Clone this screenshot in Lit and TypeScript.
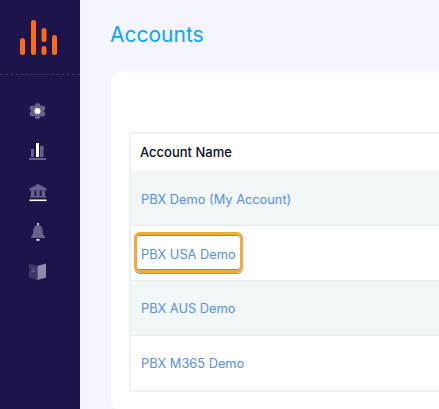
import { LitElement, html, css, svg } from "lit";
import { customElement } from "lit/decorators.js";

const dim = "#66648e";
const logo = svg`<svg class="logo" width="40" height="40" viewBox="0 0 40 40">
  <g fill="#ff6d0a">
    <rect x="0" y="18" width="5" height="17" rx="2.5"/>
    <rect x="11" y="0" width="5" height="35" rx="2.5"/>
    <rect x="21.5" y="8" width="5" height="14" rx="2.5"/>
    <rect x="21.5" y="26" width="5" height="9" rx="2.5"/>
    <rect x="32" y="15" width="5" height="20" rx="2.5"/>
  </g></svg>`;

const gear = svg`<svg width="18" height="18" viewBox="0 0 18 18">
  <g fill="${dim}"><circle cx="8.5" cy="9" r="6"/>
  <circle cx="8.5" cy="3.6" r="2.7"/><circle cx="8.5" cy="14.4" r="2.7"/>
  <circle cx="3.5" cy="6.2" r="2.7"/><circle cx="13.5" cy="6.2" r="2.7"/>
  <circle cx="3.5" cy="11.8" r="2.7"/><circle cx="13.5" cy="11.8" r="2.7"/></g>
  <circle cx="8.5" cy="9" r="3" fill="#fff"/></svg>`;

const chart = svg`<svg width="18" height="18" viewBox="0 0 18 18">
  <rect x="2" y="7" width="3" height="8" fill="${dim}"/>
  <rect x="7" y="1" width="3" height="14" fill="#fff"/>
  <rect x="11" y="4" width="3.5" height="11" fill="${dim}"/>
  <rect x="0" y="16" width="17" height="2" fill="${dim}"/></svg>`;

const bank = svg`<svg width="18" height="18" viewBox="0 0 18 18">
  <path d="M9 2 L17.5 6.5 V8.5 H0.5 V6.5 Z" fill="${dim}"/>
  <g fill="${dim}"><rect x="2" y="8.5" width="3.4" height="6"/><rect x="7.3" y="8.5" width="3.4" height="6"/><rect x="12.6" y="8.5" width="3.4" height="6"/>
  <rect x="1" y="14" width="16" height="1.5"/></g>
  <rect x="0.5" y="17.5" width="17" height="1.6" fill="#fff"/></svg>`;

const bell = svg`<svg width="16" height="18" viewBox="0 0 16 18">
  <rect x="7.2" y="1" width="1.6" height="3" fill="#fff"/>
  <path d="M8 3 C5 3 3.8 5.5 3.5 8 C3.2 11 2.8 13 1 15 V16 H15 V15 C13.2 13 12.8 11 12.5 8 C12.2 5.5 11 3 8 3 Z" fill="${dim}"/>
  <rect x="6.5" y="17" width="3" height="1.7" fill="#fff"/></svg>`;

const book = svg`<svg width="18" height="18" viewBox="0 0 18 18">
  <path d="M0 1.5 L8.5 4 V18 L0 15.5 Z" fill="#3d3768"/>
  <path d="M8.5 4 L17 1.5 V15.5 L8.5 18 Z" fill="#8d8ba8"/>
  <rect x="3" y="7" width="3" height="1" fill="${dim}"/><rect x="2.5" y="9" width="4" height="1" fill="${dim}"/></svg>`;

@customElement("app-root")
export class AppRoot extends LitElement {
  static styles = css`
    :host { display: flex; width: 439px; height: 409px; overflow: hidden; background: #f4f5fe; font-family: Inter, "Liberation Sans", sans-serif; }
    .side { flex: 0 0 80px; background: #1c144a; display: flex; flex-direction: column; align-items: center; }
    .brand { height: 75px; width: 100%; box-sizing: border-box; padding: 20px 0 0 20px; border-bottom: 1px dashed #3f3a5e; }
    .logo { display: block; }
    .nav { display: flex; flex-direction: column; align-items: center; gap: 22px; padding-top: 27px; margin-left: -4px; }
    .nav svg { display: block; overflow: visible; }
    .main { flex: 1; min-width: 0; padding: 21px 0 0 31px; }
    h1 { margin: 0 0 0 -1px; font: 400 21px/28px Inter, "Liberation Sans", sans-serif; color: #09a5ff; }
    .card { margin-top: 22px; height: 340px; width: 400px; box-sizing: border-box; background: #fff; border-radius: 12px; padding: 61px 0 0 18px; }
    .table { border: 2px solid #eef0f2; border-right: 0; width: 400px; margin-right: -100px; }
    .th { height: 38px; box-sizing: border-box; display: flex; align-items: center; padding: 0 0 2px 9px; font-size: 13px; font-weight: 500; color: #0c1024; border-bottom: 1px solid #eef0f2; }
    .row { display: flex; align-items: center; padding-left: 10px; font-size: 12.8px; color: #5490ec; border-bottom: 1px solid #e6eaec; box-sizing: border-box; position: relative; height: 55px; }
    .short { height: 54px; }
    .nudge { padding-top: 2px; }
    .row:last-child { border-bottom: 0; }
    .alt { background: #f1f6f7; }
    .hl { position: absolute; left: 3px; top: 6px; width: 109px; height: 41px; box-sizing: border-box; border: 3.5px solid #f2ab38; border-radius: 6px; box-shadow: inset 0 1px 0 #8a8a8a, inset 0 -1px 0 #8a8a8a, 0 1px 0 #9a9a9a; }
  `;
  render() {
    return html`
      <aside class="side">
        <div class="brand">${logo}</div>
        <nav class="nav">${gear}${chart}${bank}${bell}${book}</nav>
      </aside>
      <main class="main">
        <h1>Accounts</h1>
        <section class="card">
          <div class="table">
            <div class="th">Account Name</div>
            <div class="row alt short nudge">PBX Demo (My Account)</div>
            <div class="row nudge">PBX USA Demo<span class="hl"></span></div>
            <div class="row alt">PBX AUS Demo</div>
            <div class="row short">PBX M365 Demo</div>
          </div>
        </section>
      </main>`;
  }
}
